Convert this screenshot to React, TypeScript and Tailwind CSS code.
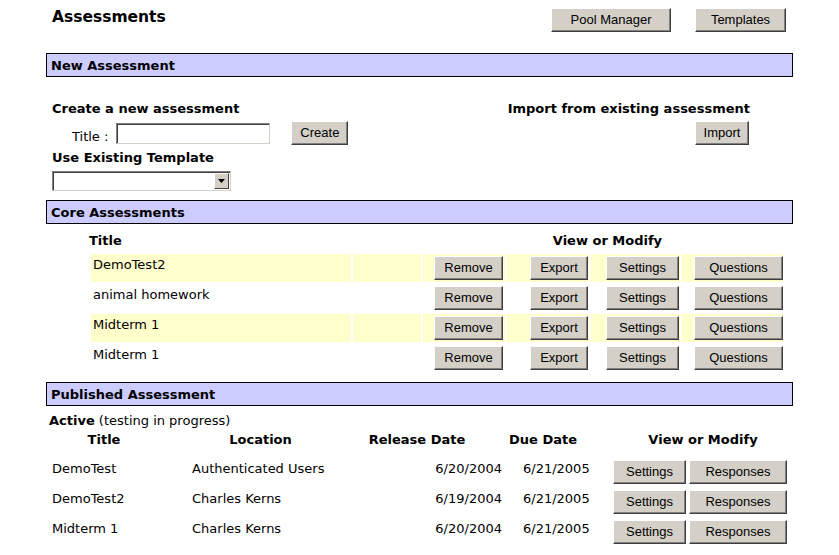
import React from "react";

const verdana = "font-['DejaVu_Sans',Verdana,sans-serif]";
const arial = "font-['Liberation_Sans',Arial,sans-serif]";

function Btn({ label, w, className = "" }: { label: string; w: string; className?: string }) {
  return (
    <button
      type="button"
      className={`${arial} ${w} h-[24px] shrink-0 bg-[#d4d0c8] text-[13px] leading-[20px] text-black border border-t-white border-l-white border-r-[#404040] border-b-[#404040] shadow-[inset_-1px_-1px_0_#808080] ${className}`}
    >
      {label}
    </button>
  );
}

function SectionBar({ title }: { title: string }) {
  return (
    <div className="h-[24px] border border-black bg-[#ccccff] pl-[4px] pt-[4px] text-[13px] leading-[16px] font-bold">
      {title}
    </div>
  );
}

type CoreRow = { title: string; shaded: boolean };

const coreRows: CoreRow[] = [
  { title: "DemoTest2", shaded: true },
  { title: "animal homework", shaded: false },
  { title: "Midterm 1", shaded: true },
  { title: "Midterm 1", shaded: false },
];

type Published = { title: string; location: string; release: string; due: string };

const published: Published[] = [
  { title: "DemoTest", location: "Authenticated Users", release: "6/20/2004", due: "6/21/2005" },
  { title: "DemoTest2", location: "Charles Kerns", release: "6/19/2004", due: "6/21/2005" },
  { title: "Midterm 1", location: "Charles Kerns", release: "6/20/2004", due: "6/21/2005" },
];

export default function App() {
  return (
    <div className={`${verdana} w-[839px] h-[555px] overflow-hidden bg-white text-black pl-[46px]`}>
      <div className="w-[747px]">
        {/* page title + toolbar */}
        <div className="flex items-start h-[53px]">
          <h1 className="ml-[6px] mt-[8px] text-[15.5px] leading-[18px] font-bold">Assessments</h1>
          <div className="ml-auto mr-[7px] mt-[8px] flex gap-[24px]">
            <Btn label="Pool Manager" w="w-[120px]" />
            <Btn label="Templates" w="w-[91px]" />
          </div>
        </div>

        <SectionBar title="New Assessment" />

        <div className="flex pt-[24px]">
          <div className="pl-[6px] w-[420px]">
            <div className="text-[13px] leading-[16px] font-bold">Create a new assessment</div>
            <div className="flex items-start mt-[4px]">
              <span className="ml-[20px] mt-[8px] text-[13px] leading-[16px]">Title :</span>
              <input
                type="text"
                className="ml-[8px] mt-[2px] w-[154px] h-[21px] bg-white border border-t-[#808080] border-l-[#808080] border-r-[#d4d0c8] border-b-[#d4d0c8] shadow-[inset_1px_1px_0_#404040] outline-none"
              />
              <Btn label="Create" w="w-[57px]" className="ml-[21px]" />
            </div>
            <div className="mt-[5px] text-[13px] leading-[16px] font-bold">Use Existing Template</div>
            <div className="mt-[5px] w-[179px] h-[20px] flex bg-white border border-t-[#808080] border-l-[#808080] border-r-[#d4d0c8] border-b-[#d4d0c8] shadow-[inset_1px_1px_0_#404040] p-[1px] pl-[2px]">
              <div className="flex-1" />
              <div className="w-[15px] h-full bg-[#d4d0c8] border border-t-white border-l-white border-r-[#404040] border-b-[#404040] flex items-center justify-center">
                <svg width="7" height="4" viewBox="0 0 7 4">
                  <path d="M0 0h7L3.5 4z" fill="#000" />
                </svg>
              </div>
            </div>
          </div>
          <div className="flex-1 flex flex-col items-end pr-[43px]">
            <div className="text-[13px] leading-[16px] font-bold">Import from existing assessment</div>
            <Btn label="Import" w="w-[54px]" className="mt-[4px] mr-[1px]" />
          </div>
        </div>

        <div className="mt-[9px]">
          <SectionBar title="Core Assessments" />
        </div>

        <div className="flex mt-[9px] text-[13px] leading-[16px] font-bold">
          <div className="ml-[43px]">Title</div>
          <div className="ml-[431px]">View or Modify</div>
        </div>

        <div className="mt-[5px] ml-[45px] grid grid-cols-[260px_68px_82px_82px_89px_101px] gap-[2px] text-[13px] leading-[16px]">
          {coreRows.map((r, i) => {
            const bg = r.shaded ? "bg-[#ffffcc]" : "bg-white";
            return (
              <React.Fragment key={i}>
                <div className={`${bg} h-[28px] pl-[2px] pt-[3px]`}>{r.title}</div>
                <div className={`${bg} h-[28px]`} />
                <div className={`${bg} h-[28px] flex justify-end items-start pt-[2px] pr-[2px]`}>
                  <Btn label="Remove" w="w-[69px]" />
                </div>
                <div className={`${bg} h-[28px] flex justify-end items-start pt-[2px] pr-[1px]`}>
                  <Btn label="Export" w="w-[58px]" />
                </div>
                <div className={`${bg} h-[28px] flex justify-end items-start pt-[2px] pr-[1px]`}>
                  <Btn label="Settings" w="w-[73px]" />
                </div>
                <div className={`${bg} h-[28px] flex justify-end items-start pt-[2px]`}>
                  <Btn label="Questions" w="w-[89px]" />
                </div>
              </React.Fragment>
            );
          })}
        </div>

        <div className="mt-[10px]">
          <SectionBar title="Published Assessment" />
        </div>

        <div className="ml-[3px] mt-[7px] text-[13px] leading-[16px]">
          <span className="font-bold">Active</span> (testing in progress)
        </div>

        <div className="flex mt-[3px] ml-[2px] text-[13px] leading-[16px] font-bold text-center">
          <div className="w-[112px]">Title</div>
          <div className="w-[201px]">Location</div>
          <div className="w-[112px]">Release Date</div>
          <div className="w-[140px]">Due Date</div>
          <div className="w-[180px]">View or Modify</div>
        </div>

        <div className="mt-[10px] ml-[6px] flex flex-col text-[13px] leading-[16px]">
          {published.map((p, i) => (
            <div key={i} className="flex items-start h-[30px]">
              <div className="w-[140px] pt-[3px]">{p.title}</div>
              <div className="w-[200px] pt-[3px]">{p.location}</div>
              <div className="w-[110px] pt-[3px] text-right">{p.release}</div>
              <div className="w-[111px] pt-[3px] pl-[21px]">{p.due}</div>
              <div className="flex gap-[3px] mt-[2px]">
                <Btn label="Settings" w="w-[73px]" />
                <Btn label="Responses" w="w-[98px]" />
              </div>
            </div>
          ))}
        </div>
      </div>
    </div>
  );
}
